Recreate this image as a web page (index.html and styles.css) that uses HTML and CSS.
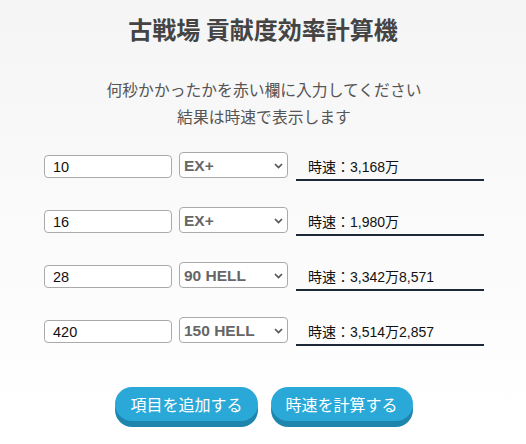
FILE: index.html
```html
<!DOCTYPE html>
<html lang="ja">
<head>
<meta charset="utf-8">
<title>古戦場 貢献度効率計算機</title>
<link rel="stylesheet" href="styles.css">
</head>
<body>
<main class="page">
  <h1 class="title">古戦場 貢献度効率計算機</h1>
  <p class="lead">何秒かかったかを赤い欄に入力してください<br>結果は時速で表示します</p>
  <div class="rows">
    <div class="row">
      <input class="sec" type="text" value="10">
      <span class="level">
        <select class="level-select"><option>EX+</option><option>90 HELL</option><option>150 HELL</option></select>
        <svg class="chev" width="9" height="6" viewBox="0 0 9 6"><path d="M1 1l3.5 3.5 3.5-3.5" fill="none" stroke="#555" stroke-width="1.7"/></svg>
      </span>
      <div class="result">時速：3,168万</div>
    </div>
    <div class="row">
      <input class="sec" type="text" value="16">
      <span class="level">
        <select class="level-select"><option>EX+</option><option>90 HELL</option><option>150 HELL</option></select>
        <svg class="chev" width="9" height="6" viewBox="0 0 9 6"><path d="M1 1l3.5 3.5 3.5-3.5" fill="none" stroke="#555" stroke-width="1.7"/></svg>
      </span>
      <div class="result">時速：1,980万</div>
    </div>
    <div class="row">
      <input class="sec" type="text" value="28">
      <span class="level">
        <select class="level-select"><option>EX+</option><option selected>90 HELL</option><option>150 HELL</option></select>
        <svg class="chev" width="9" height="6" viewBox="0 0 9 6"><path d="M1 1l3.5 3.5 3.5-3.5" fill="none" stroke="#555" stroke-width="1.7"/></svg>
      </span>
      <div class="result">時速：3,342万8,571</div>
    </div>
    <div class="row">
      <input class="sec" type="text" value="420">
      <span class="level">
        <select class="level-select"><option>EX+</option><option>90 HELL</option><option selected>150 HELL</option></select>
        <svg class="chev" width="9" height="6" viewBox="0 0 9 6"><path d="M1 1l3.5 3.5 3.5-3.5" fill="none" stroke="#555" stroke-width="1.7"/></svg>
      </span>
      <div class="result">時速：3,514万2,857</div>
    </div>
  </div>
  <div class="actions">
    <button class="btn" type="button">項目を追加する</button>
    <button class="btn" type="button">時速を計算する</button>
  </div>
</main>
</body>
</html>
```

FILE: styles.css
```css
html, body {
  margin: 0;
  padding: 0;
}
body {
  min-height: 444px;
  background: linear-gradient(#f5f5f5, #ffffff 420px);
  font-family: "Liberation Sans", "Noto Sans CJK JP", sans-serif;
  color: #444;
}
.page {
  display: flex;
  flex-direction: column;
  align-items: center;
  padding-top: 12px;
}
.title {
  margin: 0;
  font-size: 24px;
  line-height: 34px;
  font-weight: bold;
  color: #444;
  font-family: "Noto Sans CJK JP", sans-serif;
}
.lead {
  margin: 30px 0 0 2px;
  font-size: 15.8px;
  line-height: 27px;
  text-align: center;
  color: #555;
  font-family: "Noto Sans CJK JP", sans-serif;
}
.rows {
  margin-top: 22px;
  display: flex;
  flex-direction: column;
  gap: 26px;
  width: 440px;
  margin-left: 2px;
}
.row {
  display: flex;
  align-items: flex-end;
}
.sec {
  box-sizing: border-box;
  width: 128px;
  height: 23px;
  margin: 0 7px 3px 0;
  padding: 0 8px;
  border: 1px solid #aaa;
  border-radius: 4px;
  background: #fff;
  font-family: "Liberation Sans", sans-serif;
  font-size: 14.5px;
  color: #111;
  outline: none;
}
.level {
  position: relative;
  display: block;
  margin: 0 8px 3px 0;
}
.level-select {
  display: block;
  box-sizing: border-box;
  width: 109px;
  height: 26px;
  padding: 0 0 0 4px;
  border: 1px solid #aaa;
  border-radius: 4px;
  background: #fff;
  -webkit-appearance: none;
  appearance: none;
  font-family: "Liberation Sans", sans-serif;
  font-weight: bold;
  font-size: 15.5px;
  color: #666;
  outline: none;
}
.chev {
  position: absolute;
  right: 5px;
  top: 11px;
  pointer-events: none;
}
.result {
  box-sizing: border-box;
  width: 188px;
  height: 29px;
  padding-left: 12px;
  display: flex;
  align-items: center;
  border-bottom: 2px solid #1d2939;
  font-size: 14px;
  color: #111;
}
.actions {
  margin-top: 41px;
  display: flex;
  gap: 13px;
  margin-left: 2px;
}
.btn {
  height: 34px;
  padding: 0 15px;
  border: none;
  border-radius: 17px;
  background: #2aa9d8;
  box-shadow: 0 6px 0 #1e86ac;
  color: #fff;
  font-family: "Noto Sans CJK JP", sans-serif;
  font-size: 16px;
  line-height: 34px;
  cursor: pointer;
}
```
